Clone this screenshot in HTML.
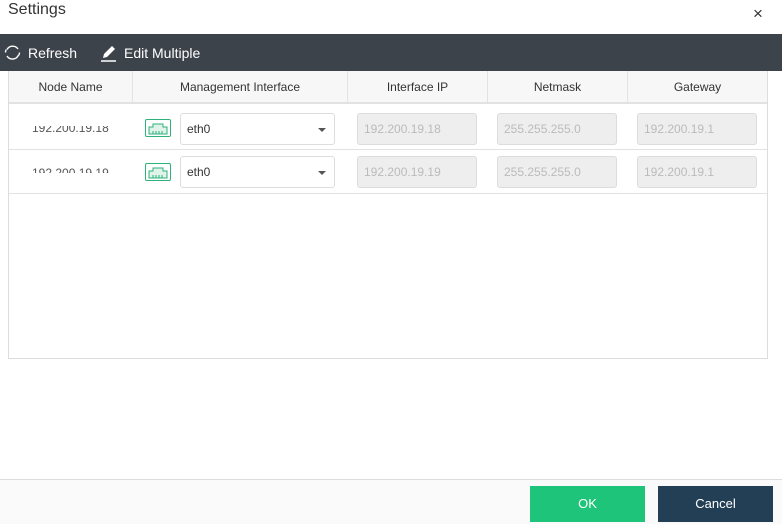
<!DOCTYPE html>
<html><head><style>
*{box-sizing:border-box;margin:0;padding:0}
body{width:782px;height:524px;background:#fff;font-family:"Liberation Sans",sans-serif;position:relative;overflow:hidden;color:#333}
.abs{position:absolute}
.title{left:8px;top:1px;font-size:16px;color:#333}
.close{left:753px;top:4px;font-size:17px;color:#333}
.tb{left:0;top:34px;width:782px;height:37px;background:#3d434a;color:#fff;font-size:14px}
.tbl{left:8px;top:71px;width:760px;height:288px;border:1px solid #ddd;border-top:none}
.hdr{left:9px;top:71px;width:758px;height:33px;background:#f7f7f7;border-bottom:2px solid #e2e2e2}
.th{position:absolute;top:0;height:33px;line-height:33px;text-align:center;font-size:12px;color:#333;border-right:1px solid #e2e2e2}
.row{left:9px;width:758px;border-bottom:1px solid #e2e2e2}
.inp{position:absolute;height:32px;border:1px solid #dcdcdc;border-radius:3px;background:#eee;color:#bbb;font-size:12px;line-height:30px;padding-left:6px}
.sel{position:absolute;height:32px;border:1px solid #ddd;border-radius:3px;background:#fff;color:#333;font-size:12px;line-height:30px;padding-left:6px;width:155px;left:180px}
.sel:after{content:"";position:absolute;right:8px;top:14px;border:4px solid transparent;border-top:4px solid #555;border-bottom:none}
.nic{position:absolute;left:145px;width:26px;height:18px}
.foot{left:0;top:479px;width:782px;height:45px;background:#fafafa;border-top:1px solid #ddd}
.btn{position:absolute;top:486px;width:115px;height:36px;color:#fff;font-size:13px;text-align:center;line-height:36px}
</style></head><body>
<div class="abs title">Settings</div>
<div class="abs close">×</div>
<div class="abs tb">
 <svg class="abs" style="left:4px;top:10px" width="17" height="17" viewBox="0 0 17 17"><path d="M3 5.5A6.5 6.5 0 0 1 14 5M14.5 11A6.5 6.5 0 0 1 3 12" fill="none" stroke="#fff" stroke-width="1.4"/><path d="M1.5 8.5A7 7 0 0 1 2.2 5.5M15.5 8.5a7 7 0 0 1-.7 2.8" fill="none" stroke="#fff" stroke-width="1.4"/></svg>
 <span class="abs" style="left:28px;top:11px">Refresh</span>
 <svg class="abs" style="left:100px;top:10px" width="18" height="18" viewBox="0 0 18 18"><path d="M3 14l1-4 8-8 3 3-8 8z" fill="#fff"/><path d="M1 17h15" stroke="#fff" stroke-width="1.5"/></svg>
 <span class="abs" style="left:124px;top:11px">Edit Multiple</span>
</div>
<div class="abs tbl"></div>
<div class="abs hdr">
 <div class="th" style="left:0;width:124px">Node Name</div>
 <div class="th" style="left:124px;width:215px">Management Interface</div>
 <div class="th" style="left:339px;width:140px">Interface IP</div>
 <div class="th" style="left:479px;width:140px">Netmask</div>
 <div class="th" style="left:619px;width:139px;border-right:none">Gateway</div>
</div>
<div class="abs row" style="top:106px;height:44px"></div>
<div class="abs row" style="top:150px;height:44px"></div>
<div class="abs" style="left:32px;top:126px;width:80px;height:8px;overflow:hidden"><div style="position:absolute;top:-5px;left:0;font-size:12px;color:#555">192.200.19.18</div></div>
<div class="abs" style="left:32px;top:166px;width:80px;height:7px;overflow:hidden"><div style="position:absolute;top:0;left:0;font-size:12px;color:#555">192.200.19.19</div></div>
<svg class="nic" style="top:119px" viewBox="0 0 26 18"><rect x="0.5" y="0.5" width="25" height="17" rx="1.5" fill="#fff" stroke="#2db37a"/><path d="M4 15V8h4V5h10v3h4v7z" fill="#dff3ea" stroke="#2db37a"/><path d="M8 12v3M11 12v3M14 12v3M17 12v3" stroke="#2db37a"/></svg>
<svg class="nic" style="top:163px" viewBox="0 0 26 18"><rect x="0.5" y="0.5" width="25" height="17" rx="1.5" fill="#fff" stroke="#2db37a"/><path d="M4 15V8h4V5h10v3h4v7z" fill="#dff3ea" stroke="#2db37a"/><path d="M8 12v3M11 12v3M14 12v3M17 12v3" stroke="#2db37a"/></svg>
<div class="sel" style="top:113px">eth0</div>
<div class="sel" style="top:156px">eth0</div>
<div class="inp" style="left:357px;top:113px;width:120px">192.200.19.18</div>
<div class="inp" style="left:497px;top:113px;width:120px">255.255.255.0</div>
<div class="inp" style="left:637px;top:113px;width:120px">192.200.19.1</div>
<div class="inp" style="left:357px;top:156px;width:120px">192.200.19.19</div>
<div class="inp" style="left:497px;top:156px;width:120px">255.255.255.0</div>
<div class="inp" style="left:637px;top:156px;width:120px">192.200.19.1</div>
<div class="abs foot"></div>
<div class="btn" style="left:530px;background:#1ec479">OK</div>
<div class="btn" style="left:658px;background:#233f55">Cancel</div>
</body></html>
